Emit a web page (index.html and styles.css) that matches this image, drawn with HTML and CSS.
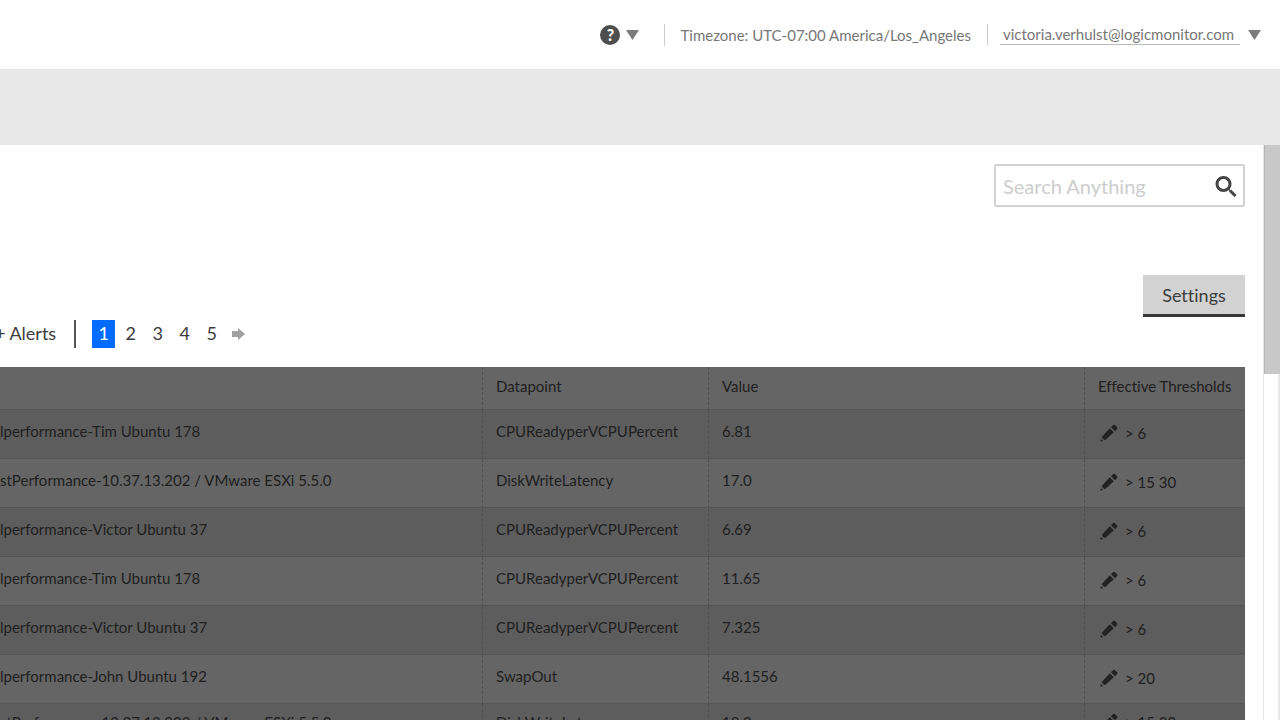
FILE: index.html
```html
<!DOCTYPE html>
<html lang="en">
<head>
<meta charset="utf-8">
<title>Alerts</title>
<link rel="stylesheet" href="styles.css">
</head>
<body>
<svg class="sprite" aria-hidden="true">
  <symbol id="pencil" viewBox="0 0 18 18">
    <path d="M.3 17.700l.6-2.800 2.200 2.200z"/>
    <path d="M1.700 13L9.800 4.200l4 4-8.800 8-2-1.200z"/>
    <path d="M11 3.200L13.200 1q.8-.7 1.600 0l2.300 2.300q.7.8 0 1.600L15 7.200z"/>
  </symbol>
  <symbol id="caret" viewBox="0 0 13 10"><path d="M0 0h13L6.500 10z"/></symbol>
</svg>
<header class="topbar">
  <button class="help" type="button" aria-label="Help">
    <span class="help-mark">?</span>
    <svg class="caret"><use href="#caret"/></svg>
  </button>
  <span class="timezone">Timezone: UTC-07:00 America/Los_Angeles</span>
  <div class="account">
    <a class="account-link" href="#">victoria.verhulst@logicmonitor.com</a>
    <svg class="caret"><use href="#caret"/></svg>
  </div>
</header>
<div class="band"></div>
<div class="workspace">
  <main class="content">
    <form class="search" role="search">
      <input class="search-input" type="text" placeholder="Search Anything" aria-label="Search Anything">
      <button class="search-button" type="button" aria-label="Search">
        <svg class="search-icon" viewBox="0 0 22 22"><circle cx="8.500" cy="9" r="6.500"/><path d="M13.200 13.700l2 2" stroke-width="1.500"/><path d="M15 15.500l5.500 5.500"/></svg>
      </button>
    </form>
    <div class="actions"><button class="settings" type="button">Settings</button></div>
    <nav class="pager" aria-label="Pages">
      <span class="pager-label">+ Alerts</span>
      <a class="page page-current" href="#" aria-current="page">1</a>
      <a class="page" href="#">2</a>
      <a class="page" href="#">3</a>
      <a class="page" href="#">4</a>
      <a class="page" href="#">5</a>
      <a class="page" href="#" aria-label="Next"><svg class="next" viewBox="0 0 13 12"><path d="M0 3h6V0l7 6-7 6V9H0z"/></svg></a>
    </nav>
    <table class="alerts">
      <colgroup><col><col class="col-datapoint"><col class="col-value"><col class="col-threshold"></colgroup>
      <thead>
        <tr><th></th><th>Datapoint</th><th>Value</th><th>Effective Thresholds</th></tr>
      </thead>
      <tbody>
        <tr><td>lperformance-Tim Ubuntu 178</td><td>CPUReadyperVCPUPercent</td><td>6.81</td><td><span class="threshold"><svg class="pencil"><use href="#pencil"/></svg>&gt; 6</span></td></tr>
        <tr><td>stPerformance-10.37.13.202 / VMware ESXi 5.5.0</td><td>DiskWriteLatency</td><td>17.0</td><td><span class="threshold"><svg class="pencil"><use href="#pencil"/></svg>&gt; 15 30</span></td></tr>
        <tr><td>lperformance-Victor Ubuntu 37</td><td>CPUReadyperVCPUPercent</td><td>6.69</td><td><span class="threshold"><svg class="pencil"><use href="#pencil"/></svg>&gt; 6</span></td></tr>
        <tr><td>lperformance-Tim Ubuntu 178</td><td>CPUReadyperVCPUPercent</td><td>11.65</td><td><span class="threshold"><svg class="pencil"><use href="#pencil"/></svg>&gt; 6</span></td></tr>
        <tr><td>lperformance-Victor Ubuntu 37</td><td>CPUReadyperVCPUPercent</td><td>7.325</td><td><span class="threshold"><svg class="pencil"><use href="#pencil"/></svg>&gt; 6</span></td></tr>
        <tr><td>lperformance-John Ubuntu 192</td><td>SwapOut</td><td>48.1556</td><td><span class="threshold"><svg class="pencil"><use href="#pencil"/></svg>&gt; 20</span></td></tr>
        <tr><td>stPerformance-10.37.13.202 / VMware ESXi 5.5.0</td><td>DiskWriteLatency</td><td>18.0</td><td><span class="threshold"><svg class="pencil"><use href="#pencil"/></svg>&gt; 15 30</span></td></tr>
      </tbody>
    </table>
  </main>
  <div class="scrollbar"><div class="scroll-thumb"></div></div>
</div>
</body>
</html>
```
FILE: styles.css
```css
* { box-sizing: border-box; }
body {
  margin: 0;
  height: 100vh;
  overflow: hidden;
  display: flex;
  flex-direction: column;
  background: #fff;
  color: #3c3c3c;
  font-family: Lato, "Liberation Sans", sans-serif;
  font-size: 15px;
  font-variant-ligatures: none;
}
button { font: inherit; border: 0; padding: 0; background: none; color: inherit; }
a { color: inherit; text-decoration: none; }
.sprite { display: none; }
.topbar {
  flex: none;
  height: 69px;
  display: flex;
  align-items: center;
  justify-content: flex-end;
  padding-right: 19px;
  color: #777;
}
.caret { width: 13px; height: 10px; fill: #7c7c7c; }
.help { display: flex; align-items: center; gap: 6px; margin-right: 25px; }
.help-mark {
  width: 20px;
  height: 20px;
  border-radius: 50%;
  background: #4e4e4e;
  color: #fff;
  font-size: 16px;
  font-weight: 900;
  line-height: 20px;
  text-align: center;
}
.timezone, .account { border-left: 1px solid #ccc; line-height: 22px; padding-left: 12px; }
.timezone { padding-left: 15px; padding-right: 16px; }
.account { display: flex; align-items: center; gap: 8px; }
.account-link { line-height: 20px; border-bottom: 1px solid #bbb; padding: 0 6px 0 3px; }
.band { flex: none; height: 76px; background: #e8e8e8; }
.workspace { flex: 1; min-height: 0; display: flex; }
.content { flex: 1; min-width: 0; padding: 19px 18px 0 0; overflow: hidden; }
.search {
  display: flex;
  align-items: center;
  width: 251px;
  height: 43px;
  margin-left: auto;
  padding: 0 6px 0 7px;
  border: 2px solid #d2d2d2;
  border-radius: 2px;
}
.search-input {
  flex: 1;
  min-width: 0;
  border: 0;
  padding: 0;
  outline: 0;
  background: none;
  font: 20px Lato, "Liberation Sans", sans-serif;
}
.search-input::placeholder { color: #cdcdcd; opacity: 1; }
.search-button { display: flex; }
.search-icon { width: 22px; height: 22px; fill: none; stroke: #444; stroke-width: 3; }
.actions { display: flex; justify-content: flex-end; margin-top: 68px; }
.settings {
  width: 102px;
  height: 42px;
  background: #d2d2d2;
  border-bottom: 3px solid #383838;
  font-size: 18px;
}
.pager { display: flex; align-items: center; gap: 4px; height: 28px; margin: 3px 0 19px; font-size: 18px; }
.pager-label { margin: 0 12px 0 -5px; padding: 0 18px 2px 0; border-right: 2px solid #555; line-height: 26px; }
.page { width: 23px; line-height: 26px; padding-bottom: 2px; text-align: center; }
.page-current { background: #006cff; color: #fff; }
.next { width: 13px; height: 12px; fill: #a0a0a0; }
.alerts {
  width: 100%;
  table-layout: fixed;
  border-collapse: separate;
  border-spacing: 0;
  background: #656565;
  color: #202020;
}
.col-datapoint { width: 226px; }
.col-value { width: 376px; }
.col-threshold { width: 160px; }
th, td {
  padding: 0 0 6px 13px;
  text-align: left;
  white-space: nowrap;
  border-bottom: 1px solid #555;
  border-right: 1px dashed #515151;
}
th:first-child, td:first-child { padding-left: 0; }
th:last-child, td:last-child { border-right: 0; }
td:last-child { padding-bottom: 2px; }
th { height: 43px; padding-bottom: 4px; font-weight: 400; }
td { height: 49px; }
tbody tr:last-child td { padding-bottom: 12px; }
tbody tr:nth-child(odd) { background: #5d5d5d; }
.threshold { display: flex; align-items: center; gap: 7px; padding-left: 2px; }
.pencil { width: 18px; height: 18px; fill: #222; }
.scrollbar { flex: none; width: 17px; border: solid #e8e8e8; border-width: 0 2px 0 1px; }
.scroll-thumb { height: 229px; margin-right: -2px; background: #c8c8c8; border-left: 1px solid #b5b5b5; }
```
